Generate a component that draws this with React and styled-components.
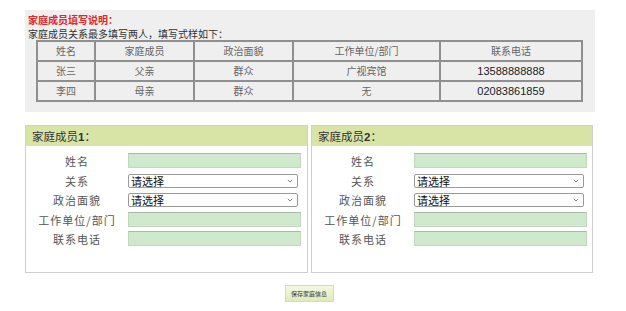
import styled, { createGlobalStyle } from 'styled-components';

const GlobalStyle = createGlobalStyle`
  body {
    margin: 0;
    background: #ffffff;
    font-family: "Noto Sans CJK SC", "Liberation Sans", sans-serif;
  }
`;

const sample = [
  { name: '张三', rel: '父亲', party: '群众', work: '广视宾馆', phone: '13588888888' },
  { name: '李四', rel: '母亲', party: '群众', work: '无', phone: '02083861859' },
];

const Dropdown = () => (
  <SelectWrap>
    <Select>
      <option>请选择</option>
    </Select>
    <Chevron viewBox="0 0 6 4">
      <path d="M0.8 0.8 L3 3 L5.2 0.8" fill="none" stroke="#777" strokeWidth="0.9" />
    </Chevron>
  </SelectWrap>
);

const Member = ({ idx }) => (
  <Panel>
    <PanelHead>
      家庭成员<b>{idx}</b>：
    </PanelHead>
    <Form>
      <Label>姓名</Label>
      <Field><TextInput /></Field>
      <Label>关系</Label>
      <Field><Dropdown /></Field>
      <Label>政治面貌</Label>
      <Field><Dropdown /></Field>
      <Label>工作单位/部门</Label>
      <Field><TextInput /></Field>
      <Label>联系电话</Label>
      <Field><TextInput /></Field>
    </Form>
  </Panel>
);

const App = () => {
  return (
    <Page>
      <GlobalStyle />
      <Notice>
        <NoticeTitle>家庭成员填写说明：</NoticeTitle>
        <NoticeText>家庭成员关系最多填写两人，填写式样如下：</NoticeText>
        <SampleTable>
          <colgroup>
            <col style={{ width: 58 }} />
            <col style={{ width: 99 }} />
            <col style={{ width: 99 }} />
            <col style={{ width: 147 }} />
            <col />
          </colgroup>
          <tbody>
            <tr>
              <Cell>姓名</Cell>
              <Cell>家庭成员</Cell>
              <Cell>政治面貌</Cell>
              <Cell>工作单位/部门</Cell>
              <Cell>联系电话</Cell>
            </tr>
            {sample.map((row, i) => (
              <tr key={i}>
                <Cell>{row.name}</Cell>
                <Cell>{row.rel}</Cell>
                <Cell>{row.party}</Cell>
                <Cell>{row.work}</Cell>
                <Cell $num>{row.phone}</Cell>
              </tr>
            ))}
          </tbody>
        </SampleTable>
      </Notice>

      <Panels>
        <Member idx={1} />
        <Member idx={2} />
      </Panels>

      <Actions>
        <SaveButton>保存家庭信息</SaveButton>
      </Actions>
    </Page>
  );
};

const Page = styled.div`
  width: 570px;
  padding: 10px 0 0 25px;
`;

const Notice = styled.div`
  background: #efefef;
  height: 102px;
  padding: 3px 0 0 3px;
  box-sizing: border-box;
`;

const NoticeTitle = styled.div`
  color: #e5262b;
  font-size: 10px;
  line-height: 13px;
  height: 13px;
  font-weight: 700;
`;

const NoticeText = styled.div`
  color: #333;
  font-size: 10px;
  line-height: 13px;
  height: 13px;
  margin-top: 1px;
`;

const SampleTable = styled.table`
  margin: 0 0 0 8px;
  width: 547px;
  border-collapse: collapse;
  table-layout: fixed;
  border: 2px solid #8f8f8f;
`;

const Cell = styled.td`
  height: 18px;
  padding: 0;
  border: 2px solid #8f8f8f;
  text-align: center;
  font-size: ${(p) => (p.$num ? '11px' : '10px')};
  font-family: ${(p) =>
    p.$num ? '"Liberation Sans", Arial, sans-serif' : '"Noto Sans CJK SC", sans-serif'};
  color: ${(p) => (p.$num ? '#222' : '#666')};
  line-height: 18px;
`;

const Panels = styled.div`
  display: flex;
  gap: 3px;
  margin-top: 13px;
`;

const Panel = styled.div`
  width: 283px;
  height: 148px;
  box-sizing: border-box;
  border: 1px solid #cfcfcf;
  &:last-child {
    width: 282px;
  }
`;

const PanelHead = styled.div`
  height: 20px;
  line-height: 20px;
  background: #d8e4a6;
  padding-left: 6px;
  font-size: 11.5px;
  color: #333;
  b {
    font-family: "Liberation Sans", Arial, sans-serif;
    font-weight: 700;
  }
`;

const Form = styled.div`
  display: grid;
  grid-template-columns: 102px 173px;
  grid-auto-rows: 19.5px;
  padding-top: 7px;
`;

const Label = styled.div`
  text-align: center;
  font-size: 11px;
  letter-spacing: 1px;
  color: #555;
  line-height: 16px;
`;

const Field = styled.div`
  display: flex;
  align-items: flex-start;
`;

const TextInput = styled.input`
  display: block;
  width: 173px;
  height: 15px;
  box-sizing: border-box;
  background: #cfe9cc;
  border: 1px solid #c3d6c0;
  border-top-color: #a9b8a7;
  margin: 0;
  padding: 0;
`;

const SelectWrap = styled.div`
  position: relative;
  width: 170px;
  height: 14px;
  margin-top: 1px;
`;

const Select = styled.select`
  display: block;
  appearance: none;
  -webkit-appearance: none;
  width: 170px;
  height: 14px;
  box-sizing: border-box;
  margin: 0;
  padding: 0 0 0 2px;
  font-size: 11px;
  line-height: 12px;
  color: #111;
  background: #fff;
  border: 1px solid #9a9a9a;
  border-radius: 2px;
  font-family: "Noto Sans CJK SC", sans-serif;
`;

const Chevron = styled.svg`
  position: absolute;
  right: 5px;
  top: 5px;
  width: 6px;
  height: 4px;
  pointer-events: none;
`;

const Actions = styled.div`
  display: flex;
  justify-content: center;
  width: 568px;
  margin-top: 12px;
`;

const SaveButton = styled.button`
  width: 49px;
  height: 17px;
  padding: 0;
  font-size: 6px;
  color: #333;
  border: 1px solid #d3dfb0;
  background: linear-gradient(#f3f8e2, #dfeab8);
  font-family: "Noto Sans CJK SC", sans-serif;
`;

export default App;
